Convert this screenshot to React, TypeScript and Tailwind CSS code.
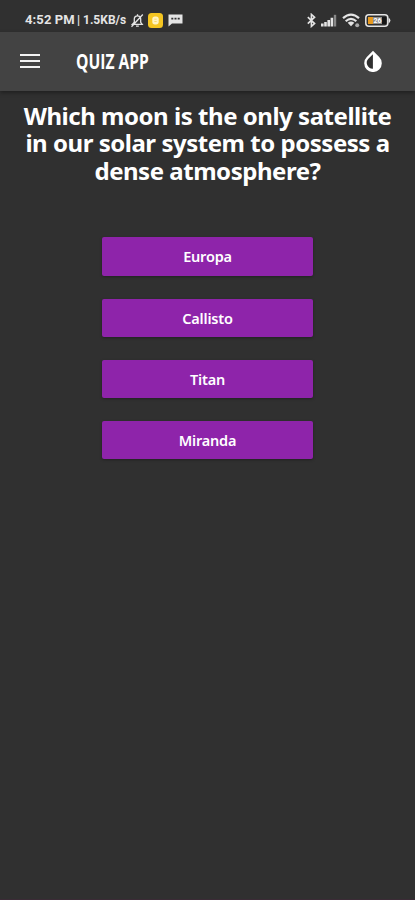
const answers = ["Europa", "Callisto", "Titan", "Miranda"];

function StatusBar() {
  return (
    <div className="flex h-8 items-center justify-between bg-[#303030] pt-2 pr-[24px] pl-[25px] font-['Roboto',sans-serif] text-[#e4e4e4]">
      <div className="flex items-center">
        <span className="w-[52px] text-[13px] leading-4 font-bold tracking-[0.1px] whitespace-nowrap">4:52 PM</span>
        <span className="w-[52px] text-[12px] leading-4 font-bold whitespace-nowrap">| 1.5KB/s</span>
        <svg className="ml-[1px] h-[15px] w-[15px]" viewBox="0 0 15 15" fill="none" stroke="currentColor" strokeWidth="1.3">
          <path d="M2.4 11.3h9.8l-1.5-2V6a3.2 3.2 0 0 0-6.4 0v3.3zM6 13.2h2.8M7.5 1.3v1.4M1.5 13.8 12.8 1.5" />
        </svg>
        <svg className="ml-[3px] h-[15px] w-[15px]" viewBox="0 0 15 15">
          <rect x="0" y="0" width="15" height="15" rx="3.5" fill="#f4c521" />
          <rect x="4.3" y="3.6" width="6.4" height="7.8" rx="2.6" fill="#fff4c4" />
          <path d="M6.3 6.2h2.4M6.3 8.5h2.4" stroke="#f4d35a" strokeWidth=".8" />
        </svg>
        <svg className="ml-[5px] h-[14px] w-[15px]" viewBox="0 0 15 14">
          <path d="M.5 1.5h14v9H4L.5 13.5z" fill="currentColor" />
          <path d="M3.3 5.7h2M6.5 5.7h2M9.7 5.7h2" stroke="#303030" strokeWidth="1.7" />
        </svg>
      </div>
      <div className="flex items-center">
        <svg className="h-[15px] w-[9px]" viewBox="0 0 9 15" fill="none" stroke="currentColor" strokeWidth="1.6">
          <path d="M.8 4.2 7.6 10.6 4.4 13.4V1.4l3.2 2.8L.8 10.6" />
        </svg>
        <svg className="ml-[5px] h-[13px] w-[16px]" viewBox="0 0 16 13" fill="currentColor">
          <path d="M0 9.5h2.6v3H0zM3.2 8h2.6v4.5H3.2zM6.4 6H9v6.5H6.4zM9.6 3.8h2.6v8.7H9.6z" />
          <path d="M12.8.8h2.4v11.7h-2.4z" fill="#888" />
        </svg>
        <svg className="ml-[5px] h-[15px] w-[19px]" viewBox="0 0 19 15" fill="none" stroke="currentColor" strokeWidth="2.2">
          <path d="M1 5.2Q9 -1.8 17 5.2M3.7 8.2Q9 3.5 14.3 8.2" />
          <path d="M5.7 9.8Q9 7.2 12.3 9.8L9 13.2z" fill="currentColor" stroke="none" />
          <circle cx="15.2" cy="12.2" r="2" fill="#aaa" stroke="none" />
        </svg>
        <svg className="ml-[4px] h-[13px] w-[26px]" viewBox="0 0 26 13">
          <rect x=".8" y=".8" width="22" height="11.4" rx="3" fill="#303030" stroke="currentColor" strokeWidth="1.5" />
          <path d="M23.6 3.4q3.6 3.1 0 6.2z" fill="currentColor" />
          <rect x="3" y="3" width="5" height="7" fill="#e79a20" />
          <rect x="8" y="3" width="9" height="7" fill="#8d8d8d" />
          <text x="8.6" y="9" fill="#fff" fontSize="7" fontWeight="700">26</text>
          <rect x="17" y="3" width="4" height="7" fill="#151515" />
        </svg>
      </div>
    </div>
  );
}

function AppBar() {
  return (
    <header className="flex h-[59px] items-center bg-[#434343] pr-[31px] pb-[2px] pl-5 text-white shadow-[0_2px_4px_rgba(0,0,0,0.35)]">
      <button aria-label="Menu" className="flex w-5 flex-col gap-[4px]">
        <span className="h-[2px] w-full bg-[#f2f2f2]" />
        <span className="h-[2px] w-full bg-[#f2f2f2]" />
        <span className="h-[2px] w-full bg-[#f2f2f2]" />
      </button>
      <h1 className="ml-[36px] origin-left scale-x-[0.71] pb-px font-['Open_Sans',sans-serif] text-[22px] leading-6 font-bold whitespace-nowrap">
        QUIZ APP
      </h1>
      <button aria-label="Theme" className="ml-auto">
        <svg className="h-[22px] w-[22px]" viewBox="0 0 22 22">
          <path d="M11 .8 17.2 7a8.8 8.8 0 1 1-12.4 0z" fill="#fff" />
          <path d="M10.9 4.2v14.6a6 6 0 0 1-4.3-10.3z" fill="#303030" />
        </svg>
      </button>
    </header>
  );
}

export default function App() {
  return (
    <div className="flex h-[900px] w-full flex-col border-b border-[#3b2b36] bg-[#303030]">
      <StatusBar />
      <AppBar />
      <main className="flex flex-col items-center pt-[11px] font-['Noto_Sans',sans-serif] text-white">
        <h2 className="text-center text-[24px] leading-[27.4px] font-bold tracking-[-0.47px] whitespace-nowrap">
          Which moon is the only satellite
          <br />
          in our solar system to possess a
          <br />
          dense atmosphere?
        </h2>
        <div className="mt-[53px] flex w-[211px] flex-col gap-[23px]">
          {answers.map((answer) => (
            <button
              key={answer}
              className="h-[38.3px] rounded-[2px] bg-[#8e24aa] text-[14.5px] leading-5 font-semibold tracking-[-0.2px] shadow-[0_1px_3px_rgba(0,0,0,0.3)]"
            >
              {answer}
            </button>
          ))}
        </div>
      </main>
    </div>
  );
}
